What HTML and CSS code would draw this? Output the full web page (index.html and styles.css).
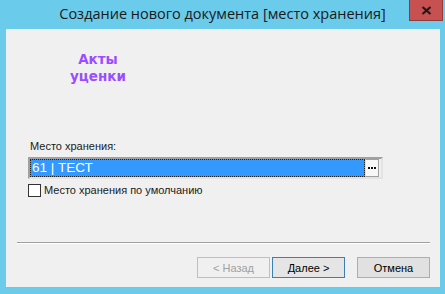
FILE: index.html
```html
<!DOCTYPE html>
<html lang="ru">
<head>
  <meta charset="UTF-8">
  <title>Создание нового документа</title>
  <link rel="stylesheet" href="styles.css">
</head>
<body>
  <div class="window">
    <div class="titlebar">
      <span class="title">Создание нового документа [место хранения]</span>
      <button class="close-btn" aria-label="Закрыть">
        <svg width="11" height="9" viewBox="0 0 11 9">
          <path d="M1.5 1 L9.5 8 M9.5 1 L1.5 8" stroke="#1b1b1b" stroke-width="2.2"/>
        </svg>
      </button>
    </div>
    <div class="client">
      <div class="doc-type">Акты<br>уценки</div>
      <div class="form">
        <label class="field-label">Место хранения:</label>
        <div class="picker">
          <div class="picker-value">61 | ТЕСТ</div>
          <div class="picker-btn">
            <svg width="8" height="2" viewBox="0 0 8 2">
              <rect x="0" y="0" width="2" height="2" fill="#111"/>
              <rect x="3" y="0" width="2" height="2" fill="#111"/>
              <rect x="6" y="0" width="2" height="2" fill="#111"/>
            </svg>
          </div>
        </div>
        <label class="check">
          <span class="check-box"></span>
          <span>Место хранения по умолчанию</span>
        </label>
      </div>
      <div class="separator"></div>
      <div class="buttons">
        <button class="btn btn-disabled">&lt; Назад</button>
        <button class="btn btn-default">Далее &gt;</button>
        <button class="btn btn-cancel">Отмена</button>
      </div>
    </div>
  </div>
</body>
</html>
```

FILE: styles.css
```css
body {
  margin: 0;
  background: #6bcbea;
  font-family: 'Liberation Sans', Arial, sans-serif;
  font-size: 11px;
  color: #000;
}

.window {
  width: 445px;
  height: 294px;
  overflow: hidden;
}

.titlebar {
  position: relative;
  height: 29px;
  text-align: center;
}

.title {
  display: inline-block;
  padding-top: 5px;
  font-family: 'Open Sans', sans-serif;
  font-size: 14.5px;
  line-height: 18px;
  color: #1a1a1a;
}

.close-btn {
  position: absolute;
  left: 409px;
  top: 0;
  width: 34px;
  height: 21px;
  margin: 0;
  padding: 0;
  border: 1px solid #8c3c3c;
  border-top: none;
  background: #c75050;
  display: flex;
  align-items: center;
  justify-content: center;
}

.client {
  margin-left: 6px;
  width: 434px;
  height: 258px;
  background: #f0f0f0;
  border-bottom: 1px solid #9fb6bf;
  display: flex;
  flex-direction: column;
}

.doc-type {
  width: 184px;
  margin-top: 22px;
  text-align: center;
  font-family: 'DejaVu Sans', sans-serif;
  font-weight: bold;
  font-size: 13.5px;
  line-height: 17px;
  color: #9b4dff;
}

.form {
  margin-top: 54px;
  padding-left: 22px;
  width: 355px;
}

.field-label {
  display: block;
  padding-left: 2px;
  line-height: 14px;
  color: #1a1a1a;
}

.picker {
  margin-top: 4px;
  height: 22px;
  box-sizing: border-box;
  border: 2px solid #a0a0a0;
  border-right-color: #e3e3e3;
  border-bottom-color: #e3e3e3;
  display: flex;
}

.picker-value {
  flex: 1;
  background: #3399ff;
  color: #fff;
  font-size: 13.5px;
  line-height: 16px;
  padding-left: 1px;
  border: 1px dotted #222;
}

.picker-btn {
  width: 12px;
  margin: 0 2px 0 0;
  background: #f7f7f7;
  border: 1px solid #a0a0a0;
  border-left: 1px solid #e0e0e0;
  display: flex;
  align-items: center;
  justify-content: center;
}

.check {
  display: flex;
  align-items: center;
  gap: 3px;
  margin-top: 5px;
  color: #1a1a1a;
  line-height: 13px;
}

.check-box {
  width: 11px;
  height: 11px;
  border: 1px solid #333;
  background: #fff;
}

.separator {
  margin: 45px 10px 0 11px;
  height: 1px;
  background: #a0a0a0;
  border-bottom: 1px solid #fff;
}

.buttons {
  display: flex;
  justify-content: flex-end;
  gap: 2px;
  margin-top: 13px;
  padding-right: 10px;
}

.btn {
  width: 73px;
  height: 21px;
  margin: 0;
  padding: 0;
  font-family: 'Liberation Sans', Arial, sans-serif;
  font-size: 11px;
  color: #000;
  background: #e1e1e1;
  border: 1px solid #adadad;
}

.btn-disabled {
  background: #f0f0f0;
  border-color: #bfbfbf;
  color: #a0a0a0;
}

.btn-default {
  border-color: #3c7fb1;
  background: #e5e5e5;
}

.btn-cancel {
  margin-left: 10px;
}
```
